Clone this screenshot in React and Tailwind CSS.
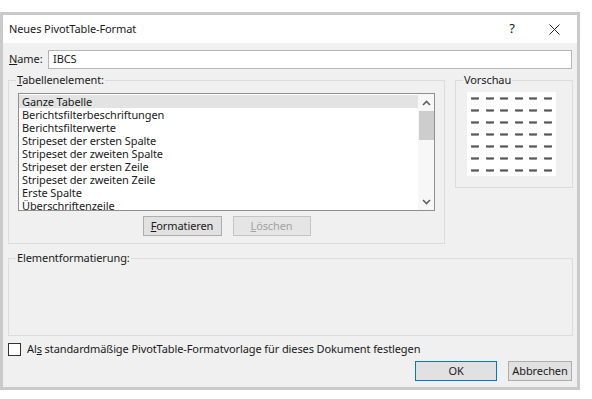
const font = { fontFamily: '"Noto Sans", "Open Sans", sans-serif' };

const items = [
  "Ganze Tabelle",
  "Berichtsfilterbeschriftungen",
  "Berichtsfilterwerte",
  "Stripeset der ersten Spalte",
  "Stripeset der zweiten Spalte",
  "Stripeset der ersten Zeile",
  "Stripeset der zweiten Zeile",
  "Erste Spalte",
  "Überschriftenzeile",
];

function Mark() {
  return (
    <svg width="8" height="3" viewBox="0 0 8 3">
      <polyline points="0,2.5 1,0.5 2,2.5 3,0.5 4,2.5 5,0.5 6,2.5 7,0.5 8,2.5" fill="none" stroke="#555" strokeWidth="1.1" />
    </svg>
  );
}

function Chevron({ up }) {
  return (
    <svg width="9" height="6" viewBox="0 0 9 6">
      <polyline points={up ? "1,5 4.5,1.5 8,5" : "1,1 4.5,4.5 8,1"} fill="none" stroke="#606060" strokeWidth="1.6" />
    </svg>
  );
}

export default function App() {
  return (
    <div className="w-[592px] h-[399px] bg-white pt-[12px] text-[11px] tracking-[-0.1px] text-[#1a1a1a]" style={font}>
      <div className="w-[580px] h-[378px] border-[3px] border-[#cacaca] bg-[#f0f0f0] flex flex-col">
        {/* Title bar */}
        <div className="h-[28px] bg-white flex items-center pl-[6px] shrink-0">
          <span className="flex-1">Neues PivotTable-Format</span>
          <span className="w-[14px] text-center text-[13px] mr-[30px]">?</span>
          <svg width="11" height="11" viewBox="0 0 11 11" className="mr-[17px]">
            <path d="M0.5 0.5 L10.5 10.5 M10.5 0.5 L0.5 10.5" stroke="#222" strokeWidth="1" />
          </svg>
        </div>

        {/* Name row */}
        <div className="flex items-center mt-[7px] pl-[6px] pr-[5px]">
          <span className="w-[39px]"><u>N</u>ame:</span>
          <div className="flex-1 h-[19px] bg-white border border-[#b5b5b5] flex items-center pl-[4px]">IBCS</div>
        </div>

        {/* Groupboxes */}
        <div className="flex items-start gap-[10px] mt-[4px] pl-[5px] pr-[4px]">
          <fieldset className="w-[437px] border border-[#dcdcdc] px-[9px] pb-[7px]">
            <legend className="ml-[-2px] px-[1px] leading-[14px]"><u>T</u>abellenelement:</legend>
            <div className="mt-[6px] h-[118px] bg-white border border-[#8f8f8f] flex">
              <div className="flex-1 pt-[1px]">
                {items.map((it, i) => (
                  <div key={it} className={`h-[13px] leading-[13px] pl-[3px] ${i === 0 ? "bg-[#e3e3e3]" : ""}`}>{it}</div>
                ))}
              </div>
              <div className="w-[16px] bg-[#f7f7f7] flex flex-col items-center">
                <div className="h-[17px] flex items-center justify-center"><Chevron up /></div>
                <div className="w-[15px] h-[29px] bg-[#cdcdcd]" />
                <div className="flex-1" />
                <div className="h-[17px] flex items-center justify-center"><Chevron /></div>
              </div>
            </div>
            <div className="flex justify-center gap-[11px] mt-[5px]">
              <div className="w-[79px] h-[20px] bg-[#e1e1e1] border border-[#adadad] flex items-center justify-center"><span><u>F</u>ormatieren</span></div>
              <div className="w-[78px] h-[20px] bg-[#e5e5e5] border border-[#c4c4c4] flex items-center justify-center text-[#a2a2a2]"><span><u>L</u>öschen</span></div>
            </div>
          </fieldset>

          <fieldset className="w-[118px] border border-[#dcdcdc] pl-[11px] pb-[11px]">
            <legend className="ml-[-4px] px-[1px] leading-[14px]">Vorschau</legend>
            <div className="mt-[5px] w-[89px] h-[84px] bg-white grid grid-cols-6 grid-rows-7 px-[1px]">
              {Array.from({ length: 42 }).map((_, i) => (
                <div key={i} className="flex items-center justify-center"><Mark /></div>
              ))}
            </div>
          </fieldset>
        </div>

        {/* Elementformatierung */}
        <div className="mt-[7px] pl-[5px] pr-[4px]">
          <fieldset className="border border-[#dcdcdc] h-[85px]">
            <legend className="ml-[7px] px-[1px] leading-[14px]">Elementformatierung:</legend>
          </fieldset>
        </div>

        {/* Checkbox */}
        <div className="flex items-center h-[14px] mt-[6px] pl-[5px]">
          <div className="w-[13px] h-[13px] border border-[#333] bg-white" />
          <span className="ml-[6px] leading-[14px]">Al<u>s</u> standardmäßige PivotTable-Formatvorlage für dieses Dokument festlegen</span>
        </div>

        {/* Buttons */}
        <div className="flex justify-end gap-[11px] mt-[5px] pr-[5px]">
          <div className="w-[82px] h-[20px] bg-[#e1e1e1] border border-[#0078d7] flex items-center justify-center">OK</div>
          <div className="w-[64px] h-[20px] bg-[#e1e1e1] border border-[#adadad] flex items-center justify-center">Abbrechen</div>
        </div>
      </div>
    </div>
  );
}
